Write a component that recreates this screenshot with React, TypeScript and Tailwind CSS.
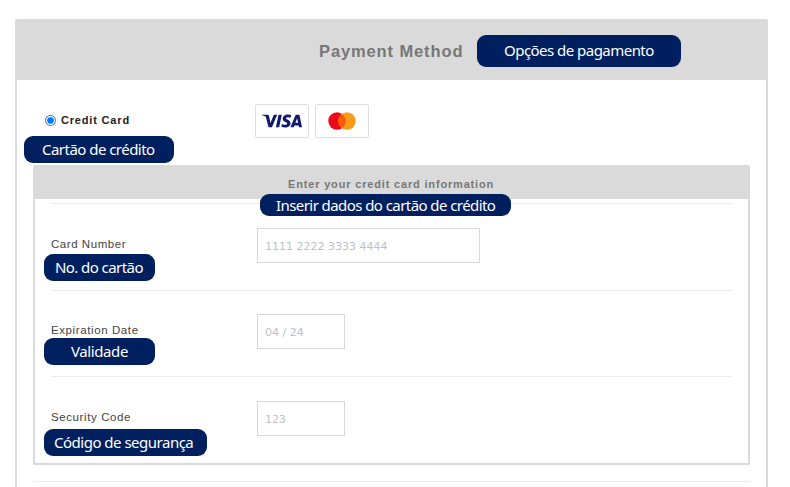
import { ReactNode } from 'react';
import { SiVisa } from 'react-icons/si';
import { twMerge } from 'tailwind-merge';

interface BadgeProps {
  children: ReactNode;
  className?: string;
  textClassName?: string;
}

// Navy label with the Portuguese translation of the caption next to it
function Badge({ children, className, textClassName }: BadgeProps) {
  return (
    <span
      className={twMerge(
        "absolute z-10 flex h-[27px] items-center whitespace-nowrap rounded-[9px] bg-[#001f5f] pb-px font-['Noto_Sans','Open_Sans',sans-serif] text-[15px] leading-none text-white",
        className,
      )}
    >
      <span className={textClassName}>{children}</span>
    </span>
  );
}

interface FieldProps {
  label: string;
  labelClassName?: string;
  placeholder: string;
  inputClassName: string;
  rowClassName: string;
  badge: ReactNode;
}

function Field({ label, labelClassName, placeholder, inputClassName, rowClassName, badge }: FieldProps) {
  return (
    <div className={twMerge('relative flex border-t border-[#ebebeb] pt-6', rowClassName)}>
      <label className={twMerge('w-[206px] pt-[9px] text-[11.5px] leading-[14px] text-[#444]', labelClassName)}>
        {label}
      </label>
      <input
        type="text"
        placeholder={placeholder}
        className={twMerge(
          "h-[35px] border border-[#d5d7d9] bg-white px-[7px] pt-[2px] font-['DejaVu_Sans',sans-serif] text-[11px] text-[#444] outline-none placeholder:text-[#bcc1ca]",
          inputClassName,
        )}
      />
      {badge}
    </div>
  );
}

function CardLogos() {
  return (
    <div className="flex gap-[6px]">
      <div className="flex h-[34px] w-[54px] items-center justify-center rounded-[2px] border border-[#dcdde3]">
        <SiVisa className="h-[40px] w-[40px] shrink-0 text-[#10196c]" />
      </div>
      <div className="flex h-[34px] w-[54px] items-center justify-center rounded-[2px] border border-[#dcdde3]">
        <svg width="28" height="18" viewBox="0 0 28 18">
          <circle cx="9" cy="9" r="8.7" fill="#eb0a1b" />
          <circle cx="19" cy="9" r="8.7" fill="#f89d1b" />
          <path d="M14 1.9a8.7 8.7 0 0 1 0 14.2a8.7 8.7 0 0 1 0-14.2z" fill="#fb5b08" />
        </svg>
      </div>
    </div>
  );
}

export default function App() {
  return (
    <div className="h-[487px] w-[790px] overflow-hidden bg-white pl-[15px] pt-[19px] font-['Liberation_Sans',Arial,sans-serif]">
      <section className="h-[500px] w-[753px] rounded-[2px] border-2 border-t-0 border-[#dadada]">
        <header className="relative flex h-[61px] items-center bg-[#dadada] pl-[302px]">
          <h1 className="pt-[3px] text-[16.5px] font-bold leading-5 tracking-[0.88px] text-[#777]">Payment Method</h1>
          <Badge className="left-[460px] top-4 h-8 w-[204px] pb-[2px] pl-[27px]" textClassName="tracking-[-0.53px]">
            Opções de pagamento
          </Badge>
        </header>

        <div className="relative flex h-[85px] pl-7 pt-6">
          <label className="flex h-[32px] w-[210px] items-center text-[11px] font-bold tracking-[0.82px] text-[#222]">
            <input type="radio" name="method" defaultChecked className="mr-[5px] h-[11px] w-[11px] accent-[#0075ff]" />
            Credit Card
          </label>
          <CardLogos />
          <Badge className="left-[7px] top-14 w-[150px] pl-[18px]" textClassName="tracking-[-0.53px]">
            Cartão de crédito
          </Badge>
        </div>

        <div className="ml-4 h-[300px] w-[717px] rounded-[2px] border-2 border-t-0 border-[#dadada]">
          <div className="relative flex h-[34px] items-center bg-[#dadada] pl-[253px]">
            <h2 className="pt-[3px] text-[11px] font-bold leading-[14px] tracking-[0.83px] text-[#777]">
              Enter your credit card information
            </h2>
            <Badge className="left-[225px] top-[29px] h-[22px] w-[251px] pb-0 pl-4" textClassName="tracking-[-0.57px]">
              Inserir dados do cartão de crédito
            </Badge>
          </div>

          <div className="px-4 pt-1">
            <Field
              label="Card Number"
              labelClassName="tracking-[0.55px]"
              placeholder="1111 2222 3333 4444"
              rowClassName="h-[87px]"
              inputClassName="w-[223px]"
              badge={
                <Badge className="left-[-7px] top-[50px] w-[111px] pb-0 pl-[11px]" textClassName="tracking-[-0.57px]">
                  No. do cartão
                </Badge>
              }
            />
            <Field
              label="Expiration Date"
              labelClassName="tracking-[0.6px]"
              placeholder="04 / 24"
              rowClassName="h-[86px] pt-[23px]"
              inputClassName="w-[88px]"
              badge={
                <Badge className="left-[-7px] top-[47px] w-[111px] pl-[27px]" textClassName="tracking-[-0.4px]">
                  Validade
                </Badge>
              }
            />
            <Field
              label="Security Code"
              labelClassName="tracking-[0.6px]"
              placeholder="123"
              rowClassName="h-[86px]"
              inputClassName="w-[88px]"
              badge={
                <Badge className="left-[-7px] top-[52px] w-[163px] pl-[10px]" textClassName="tracking-[-0.5px]">
                  Código de segurança
                </Badge>
              }
            />
          </div>
        </div>

        <hr className="ml-4 mt-4 w-[717px] border-[#ebebeb]" />
      </section>
    </div>
  );
}
